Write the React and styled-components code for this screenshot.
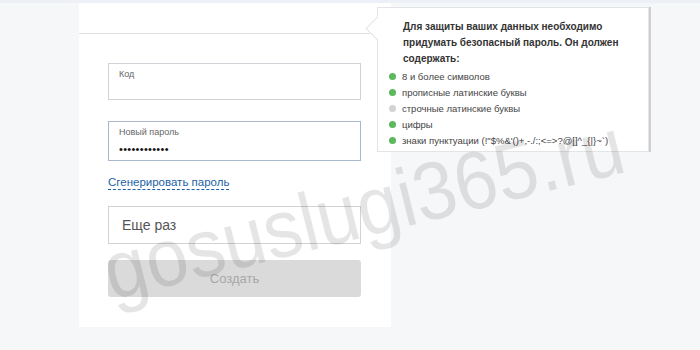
import styled, { createGlobalStyle } from "styled-components";

const Global = createGlobalStyle`
  html, body { margin: 0; padding: 0; }
  body {
    background: #f5f7f8;
    font-family: Arial, "Liberation Sans", sans-serif;
    width: 700px;
    height: 350px;
    overflow: hidden;
  }
`;

const Page = styled.div`
  position: relative;
  width: 700px;
  height: 350px;
  overflow: hidden;
  border-top: 3px solid #eef0f7;
  box-sizing: border-box;
  padding-left: 79px;
  display: flex;
  align-items: flex-start;
`;

const Card = styled.div`
  width: 312px;
  height: 324px;
  background: #fff;
  display: flex;
  flex-direction: column;
`;

const CardHead = styled.div`
  height: 30px;
  width: 296px;
  border-bottom: 1px solid #dde0e4;
`;

const Form = styled.div`
  padding: 29px 0 0 29px;
  display: flex;
  flex-direction: column;
`;

const Field = styled.div`
  width: 253px;
  height: ${(p) => p.h || 37}px;
  box-sizing: border-box;
  border: 1px solid ${(p) => (p.focus ? "#a9b8cc" : "#cfd3d8")};
  padding: 5px 10px 0;
  margin-bottom: ${(p) => p.mb || 0}px;
  background: #fff;
`;

const Label = styled.div`
  font-size: 9px;
  color: #666;
  line-height: 11px;
`;

const Dots = styled.div`
  font-size: 11px;
  letter-spacing: 0.3px;
  color: #111;
  margin-top: 5px;
  line-height: 12px;
`;

const Link = styled.a`
  align-self: flex-start;
  font-size: 11.5px;
  color: #1d5fa6;
  text-decoration: none;
  border-bottom: 1px dashed #1d5fa6;
  line-height: 13px;
  margin: 0 0 16px;
`;

const Placeholder = styled.div`
  width: 253px;
  height: 38px;
  box-sizing: border-box;
  border: 1px solid #cfd3d8;
  padding-left: 13px;
  display: flex;
  align-items: center;
  font-size: 14px;
  color: #555;
  margin-bottom: 16px;
`;

const Button = styled.div`
  width: 253px;
  height: 37px;
  border-radius: 3px;
  background: #dadada;
  color: #a8a8a8;
  font-size: 13px;
  display: flex;
  align-items: center;
  justify-content: center;
`;

const Tip = styled.div`
  position: absolute;
  left: 377px;
  top: 4px;
  width: 272px;
  height: 145px;
  box-sizing: border-box;
  background: #fff;
  border: 1px solid #e2e4e7;
  box-shadow: 2px 0 0 #cfcfcf;
  padding: 11px 10px 0 11px;

  &::before {
    content: "";
    position: absolute;
    left: -9px;
    top: 12px;
    width: 16px;
    height: 16px;
    background: #fff;
    border-left: 1px solid #e2e4e7;
    border-bottom: 1px solid #e2e4e7;
    transform: rotate(45deg);
  }
`;

const TipTitle = styled.div`
  position: relative;
  padding-left: 14px;
  font-size: 10px;
  font-weight: bold;
  color: #333;
  line-height: 16px;
  margin-bottom: 1px;
`;

const List = styled.ul`
  list-style: none;
  margin: 0;
  padding: 0;
  display: flex;
  flex-direction: column;
`;

const Item = styled.li`
  display: flex;
  align-items: center;
  gap: 6px;
  font-size: 9.5px;
  color: #444;
  height: 16px;

  &::before {
    content: "";
    width: 7px;
    height: 7px;
    border-radius: 50%;
    background: ${(p) => (p.ok ? "#5cb85c" : "#d3d3d3")};
  }
`;

const Watermark = styled.div`
  position: absolute;
  left: 113px;
  top: 228px;
  font-size: 82px;
  line-height: 1;
  font-family: Arial, "Liberation Sans", sans-serif;
  color: rgba(0, 0, 0, 0.1);
  transform-origin: 0 74px;
  transform: rotate(-14deg) scaleX(0.92);
  white-space: nowrap;
  pointer-events: none;
`;

const rules = [
  ["8 и более символов", true],
  ["прописные латинские буквы", true],
  ["строчные латинские буквы", false],
  ["цифры", true],
  ["знаки пунктуации (!\"$%&'()+,-./:;<=>?@[]^_{|}~`)", true],
];

export default function App() {
  return (
    <>
      <Global />
      <Page>
        <Card>
          <CardHead />
          <Form>
            <Field mb={21}>
              <Label>Код</Label>
            </Field>
            <Field focus h={40} mb={15}>
              <Label>Новый пароль</Label>
              <Dots>••••••••••••</Dots>
            </Field>
            <Link href="#">Сгенерировать пароль</Link>
            <Placeholder>Еще раз</Placeholder>
            <Button>Создать</Button>
          </Form>
        </Card>
        <Tip>
          <TipTitle>
            Для защиты ваших данных необходимо придумать безопасный пароль. Он
            должен содержать:
          </TipTitle>
          <List>
            {rules.map(([t, ok]) => (
              <Item key={t} ok={ok}>
                {t}
              </Item>
            ))}
          </List>
        </Tip>
        <Watermark>gosuslugi365.ru</Watermark>
      </Page>
    </>
  );
}
